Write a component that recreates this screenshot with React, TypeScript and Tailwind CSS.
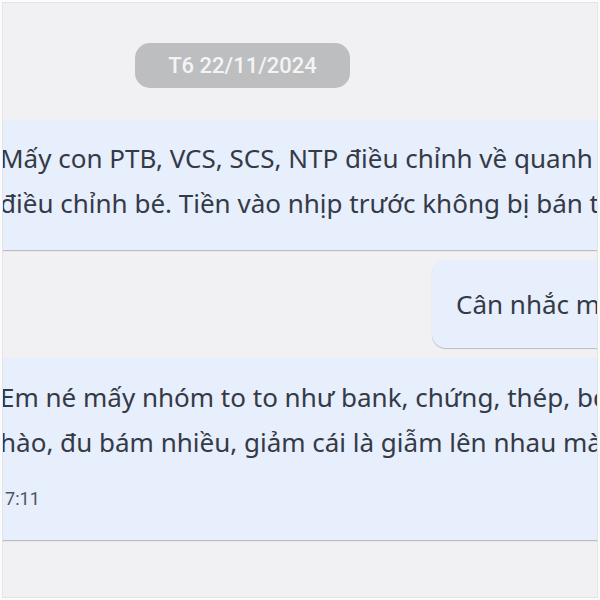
import React from 'react';

const bodyFont = { fontFamily: '"Noto Sans", "Open Sans", sans-serif' };
const metaFont = { fontFamily: 'Roboto, "Noto Sans", sans-serif' };

function Bubble({ lines, time, top }: { lines: string[]; time?: string; top: string }) {
  return (
    <div
      className={`-ml-[20px] w-[700px] bg-[#e7eefc] pl-[17px] shadow-[0_1px_1px_rgba(0,0,0,0.22)] ${top} ${
        time ? 'pb-[31px]' : 'pb-[24px]'
      }`}
    >
      <div className="whitespace-nowrap text-[26px] leading-[45px] text-[#343a46]" style={bodyFont}>
        {lines.map((l) => (
          <div key={l}>{l}</div>
        ))}
      </div>
      {time && (
        <div className="mt-[24px] -ml-[5px] text-[18px] leading-[20px] text-[#50555d]" style={metaFont}>
          {time}
        </div>
      )}
    </div>
  );
}

export default function App() {
  return (
    <div className="h-[600px] w-[600px] overflow-hidden bg-[#fbfbfc] p-[2px]">
      <div className="h-full w-full overflow-hidden border border-[#e3e4e7] bg-[#f1f1f3]">
        <div className="flex flex-col pt-[40px]">
          {/* date divider */}
          <div className="flex pl-[132px]">
            <div
              className="flex h-[45px] w-[215px] items-center justify-center rounded-[15px] bg-[#bdbec0] text-[22px] font-medium text-[#f4f4f5]"
              style={metaFont}
            >
              T6 22/11/2024
            </div>
          </div>

          {/* incoming */}
          <div className="mt-[32px]">
            <Bubble
              top="pt-[16px]"
              lines={[
                'Mấy con PTB, VCS, SCS, NTP điều chỉnh về quanh',
                'điều chỉnh bé. Tiền vào nhịp trước không bị bán t',
              ]}
            />
          </div>

          {/* outgoing */}
          <div className="mt-[10px] flex justify-end">
            <div className="-mr-[40px] flex h-[88px] w-[205px] items-center overflow-hidden rounded-[14px] bg-[#e7eefc] pl-[24px] shadow-[0_1px_1px_rgba(0,0,0,0.22)]">
              <span className="whitespace-nowrap text-[26px] text-[#343a46]" style={bodyFont}>
                Cân nhắc m
              </span>
            </div>
          </div>

          {/* incoming with time */}
          <div className="mt-[10px]">
            <Bubble
              top="pt-[17px]"
              lines={[
                'Em né mấy nhóm to to như bank, chứng, thép, bđ',
                'hào, đu bám nhiều, giảm cái là giẫm lên nhau mà',
              ]}
              time="17:11"
            />
          </div>
        </div>
      </div>
    </div>
  );
}
